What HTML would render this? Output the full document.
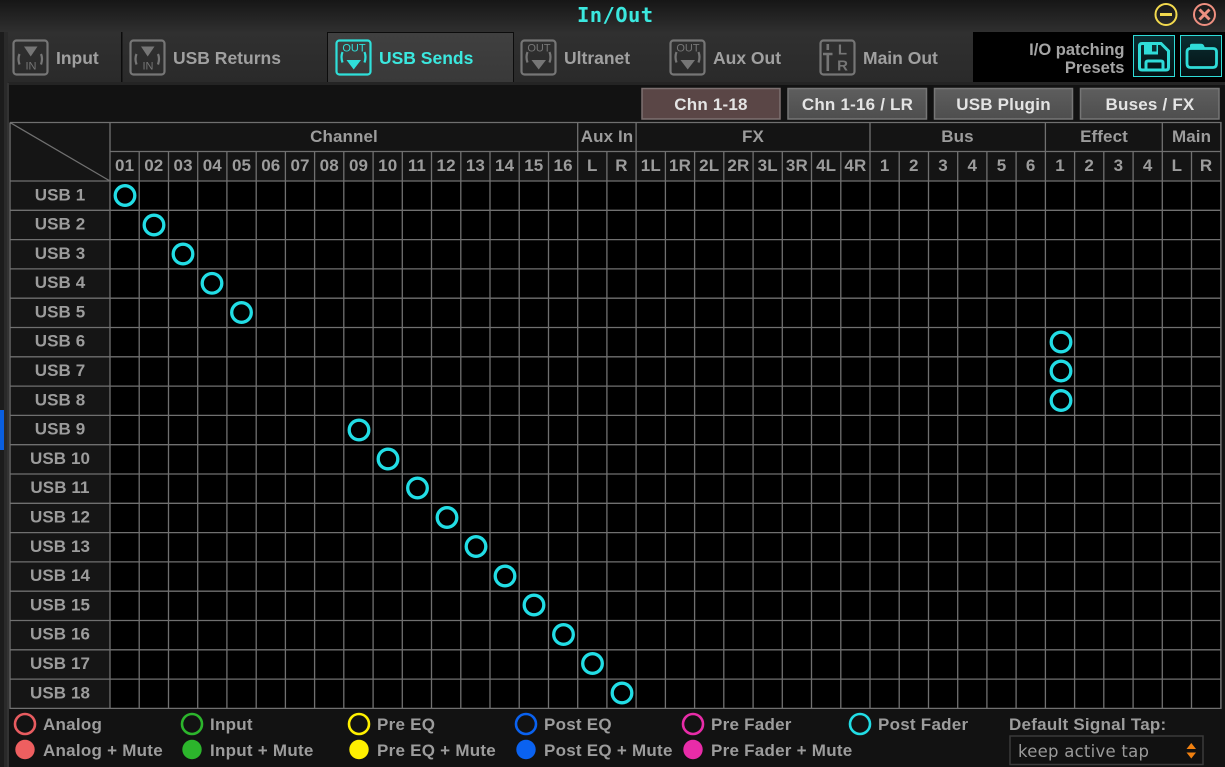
<!DOCTYPE html>
<html><head><meta charset="utf-8"><style>
html,body{margin:0;padding:0;background:#121212;width:1225px;height:767px;overflow:hidden}
svg{display:block;position:absolute;left:0;top:0}
text{font-family:"Liberation Sans",sans-serif;font-weight:bold;font-size:17px;fill:#9c9c9c;letter-spacing:.25px}
.m{text-anchor:middle;letter-spacing:.1px}
.t{font-size:17.5px;fill:#a0a0a0;letter-spacing:0}
.b{font-size:17px;fill:#e4e4e4;text-anchor:middle;letter-spacing:.2px}
.ic{font-size:11px;font-weight:normal;fill:#767676;text-anchor:middle;letter-spacing:0}
.g{fill:none;stroke:#767676;stroke-width:2.2}
.c{fill:none;stroke:#22dde5;stroke-width:3.3}
</style></head><body>
<svg width="1225" height="767" viewBox="0 0 1225 767" xmlns="http://www.w3.org/2000/svg">
<defs>
<linearGradient id="tb" x1="0" y1="0" x2="0" y2="1"><stop offset="0" stop-color="#161616"/><stop offset="1" stop-color="#2f2f2f"/></linearGradient>
<linearGradient id="tab" x1="0" y1="0" x2="0" y2="1"><stop offset="0" stop-color="#303030"/><stop offset="1" stop-color="#2a2a2a"/></linearGradient>
<linearGradient id="act" x1="0" y1="0" x2="0" y2="1"><stop offset="0" stop-color="#404040"/><stop offset="1" stop-color="#393939"/></linearGradient>
<linearGradient id="btn" x1="0" y1="0" x2="0" y2="1"><stop offset="0" stop-color="#5e5e5e"/><stop offset="1" stop-color="#4e4e4e"/></linearGradient>
<linearGradient id="sv" x1="0" y1="0" x2="0" y2="1"><stop offset="0" stop-color="#0a2f33"/><stop offset="1" stop-color="#041012"/></linearGradient>
</defs>

<rect width="1225" height="767" fill="#121212"/>
<rect width="1225" height="32" fill="url(#tb)"/>
<rect y="32" width="1225" height="51" fill="url(#tab)"/>
<rect x="973" y="32" width="252" height="50" fill="#000"/>
<rect x="121" y="32" width="1.5" height="50" fill="#0c0c0c"/>
<rect x="328" y="33" width="185" height="49" fill="url(#act)"/>
<path d="M327.500 82V32.500H513.500V82" fill="none" stroke="#0c0c0c"/>
<rect y="82" width="1225" height="3" fill="#242424"/>

<rect x="0" y="32" width="8" height="735" fill="#2a2a2a"/>
<rect x="0" y="32" width="4" height="735" fill="#1c1c1c"/>
<rect x="0" y="410" width="4" height="40" fill="#0a5fe0"/>
<rect x="7" y="83" width="2" height="684" fill="#333"/>
<rect x="9" y="85" width="1216" height="682" fill="#121212"/>

<text x="577" y="22" style="font-family:'DejaVu Sans Mono',monospace;font-size:20.500px;fill:#3be8df;letter-spacing:.4px">In/Out</text>

<circle cx="1166" cy="14.500" r="10.500" fill="none" stroke="#f2d94e" stroke-width="2"/>
<path d="M1160 14.500H1172" stroke="#f2d94e" stroke-width="3" fill="none"/>
<circle cx="1204.500" cy="14.500" r="10.500" fill="none" stroke="#ee8f80" stroke-width="2"/>
<path d="M1199.500 9.500L1209.500 19.500M1209.500 9.500L1199.500 19.500" stroke="#ee8f80" stroke-width="3" fill="none"/>

<g transform="translate(13.500 40.500)"><rect width="34" height="34" rx="3" class="g"/><path d="M10.500 6H24L17.200 16Z" fill="#767676"/><path d="M6 13.500Q4 18 6 24M27.500 13.500Q29.500 18 27.500 24" class="g"/><text x="17.500" y="29" class="ic">IN</text></g>
<g transform="translate(130.500 40.500)"><rect width="34" height="34" rx="3" class="g"/><path d="M10.500 6H24L17.200 16Z" fill="#767676"/><path d="M6 13.500Q4 18 6 24M27.500 13.500Q29.500 18 27.500 24" class="g"/><text x="17.500" y="29" class="ic">IN</text></g>
<g transform="translate(336.500 40.500)"><rect width="34" height="34" rx="3" fill="none" stroke="#2fe0da" stroke-width="2.200"/><path d="M10 19.500H24.500L17.200 29Z" fill="#2fe0da"/><path d="M6 11.500Q4 16.500 6 22M28 11.500Q30 16.500 28 22" fill="none" stroke="#2fe0da" stroke-width="2.200"/><text x="17.500" y="11" class="ic" style="fill:#2fe0da">OUT</text></g>
<g transform="translate(521.500 40.500)"><rect width="34" height="34" rx="3" class="g"/><path d="M10 19.500H24.500L17.200 29Z" fill="#767676"/><path d="M6 11.500Q4 16.500 6 22M28 11.500Q30 16.500 28 22" class="g"/><text x="17.500" y="11" class="ic">OUT</text></g>
<g transform="translate(670.500 40.500)"><rect width="34" height="34" rx="3" class="g"/><path d="M10 19.500H24.500L17.200 29Z" fill="#767676"/><path d="M6 11.500Q4 16.500 6 22M28 11.500Q30 16.500 28 22" class="g"/><text x="17.500" y="11" class="ic">OUT</text></g>
<g transform="translate(820.500 40.500)"><rect width="34" height="34" rx="3" class="g"/><path d="M7.300 3.500V9.500M7.300 14V30.500M2.500 13.500H12" class="g" style="stroke-width:2.600"/><text x="22" y="14" class="ic" style="font-size:15px;font-weight:bold">L</text><text x="22" y="30" class="ic" style="font-size:15px;font-weight:bold">R</text></g>

<text x="56" y="64" class="t">Input</text>
<text x="173" y="64" class="t">USB Returns</text>
<text x="379" y="64" class="t" style="fill:#3be8df">USB Sends</text>
<text x="564" y="64" class="t">Ultranet</text>
<text x="713" y="64" class="t">Aux Out</text>
<text x="863" y="64" class="t">Main Out</text>

<text x="1124.500" y="55" style="text-anchor:end;font-size:16.500px;fill:#a4a4a4;letter-spacing:0">I/O patching</text>
<text x="1124.500" y="73" style="text-anchor:end;font-size:16.500px;fill:#a4a4a4;letter-spacing:0">Presets</text>

<rect x="1133.500" y="35.500" width="41" height="41" fill="url(#sv)" stroke="#2fdcd8"/>
<path d="M1142 43.500H1161L1168.500 51V67.500Q1168.500 70 1166 70H1142Q1139.500 70 1139.500 67.500V46Q1139.500 43.500 1142 43.500Z" fill="none" stroke="#2fdcd8" stroke-width="3"/>
<path d="M1144 43H1158V54.500H1144Z" fill="#2fdcd8"/><rect x="1152" y="45" width="4.500" height="6.500" fill="#0a2f33"/>
<path d="M1146 70V63Q1146 61 1148 61H1161Q1163 61 1163 63V70" fill="none" stroke="#2fdcd8" stroke-width="3"/>
<rect x="1180.500" y="35.500" width="41" height="41" fill="url(#sv)" stroke="#2fdcd8"/>
<path d="M1187 52Q1187 48.500 1190.500 48.500H1213Q1216.500 48.500 1216.500 52V63.500Q1216.500 67.500 1213 67.500H1190.500Q1187 67.500 1187 63.500Z" fill="none" stroke="#2fdcd8" stroke-width="2.800"/>
<path d="M1190 48V45.500Q1190 43.800 1192 43.800H1201Q1203 43.800 1204 45.500L1205 48Z" fill="#2fdcd8"/>

<rect x="642" y="88.500" width="138" height="30.500" fill="#5a4646" stroke="#7c7070" stroke-width="1.500"/>
<rect x="788" y="88.500" width="138.500" height="30.500" fill="url(#btn)" stroke="#767676" stroke-width="1.500"/>
<rect x="934.500" y="88.500" width="138" height="30.500" fill="url(#btn)" stroke="#767676" stroke-width="1.500"/>
<rect x="1080.500" y="88.500" width="138.500" height="30.500" fill="url(#btn)" stroke="#767676" stroke-width="1.500"/>
<text x="711" y="110" class="b">Chn 1-18</text>
<text x="857.500" y="110" class="b">Chn 1-16 / LR</text>
<text x="1003.500" y="110" class="b">USB Plugin</text>
<text x="1150" y="110" class="b">Buses / FX</text>

<rect x="10" y="122.500" width="100" height="586" fill="#151515"/>
<rect x="110" y="122.500" width="1111" height="58.500" fill="#141414"/>
<rect x="110" y="181" width="1111" height="527.400" fill="#000"/>
<path d="M10 122.500H1221V708.400H110M110 122.500V708.400M10 122.500V708.400H110M10 122.500L110 181M110 151.500H1221M10 181H1221
M577.700 122.500V181M636.100 122.500V181M870 122.500V181M1045.400 122.500V181M1162.300 122.500V181M1220.800 122.500V708.400
M139.200 151.500V708.400M168.500 151.500V708.400M197.700 151.500V708.400M226.900 151.500V708.400M256.200 151.500V708.400M285.400 151.500V708.400M314.600 151.500V708.400M343.800 151.500V708.400M373.100 151.500V708.400M402.300 151.500V708.400M431.500 151.500V708.400M460.800 151.500V708.400M490 151.500V708.400M519.200 151.500V708.400M548.500 151.500V708.400M577.700 151.500V708.400M606.900 151.500V708.400M636.100 151.500V708.400M665.400 151.500V708.400M694.600 151.500V708.400M723.800 151.500V708.400M753.100 151.500V708.400M782.300 151.500V708.400M811.500 151.500V708.400M840.800 151.500V708.400M870 151.500V708.400M899.200 151.500V708.400M928.500 151.500V708.400M957.700 151.500V708.400M986.900 151.500V708.400M1016.100 151.500V708.400M1045.400 151.500V708.400M1074.600 151.500V708.400M1103.800 151.500V708.400M1133.100 151.500V708.400M1162.300 151.500V708.400M1191.500 151.500V708.400
M10 210.300H1221M10 239.600H1221M10 268.900H1221M10 298.200H1221M10 327.500H1221M10 356.800H1221M10 386.100H1221M10 415.400H1221M10 444.700H1221M10 474H1221M10 503.300H1221M10 532.600H1221M10 561.900H1221M10 591.200H1221M10 620.500H1221M10 649.800H1221M10 679.100H1221" fill="none" stroke="#707070" stroke-width="1.300"/>

<g>
<text x="344" y="142" class="m">Channel</text><text x="607" y="142" class="m">Aux In</text><text x="753" y="142" class="m">FX</text><text x="957.500" y="142" class="m">Bus</text><text x="1104" y="142" class="m">Effect</text><text x="1191.500" y="142" class="m">Main</text>
<text x="124.600" y="171" class="m">01</text><text x="153.800" y="171" class="m">02</text><text x="183.100" y="171" class="m">03</text><text x="212.300" y="171" class="m">04</text><text x="241.500" y="171" class="m">05</text><text x="270.800" y="171" class="m">06</text><text x="300" y="171" class="m">07</text><text x="329.200" y="171" class="m">08</text><text x="358.500" y="171" class="m">09</text><text x="387.700" y="171" class="m">10</text><text x="416.900" y="171" class="m">11</text><text x="446.100" y="171" class="m">12</text><text x="475.400" y="171" class="m">13</text><text x="504.600" y="171" class="m">14</text><text x="533.800" y="171" class="m">15</text><text x="563.100" y="171" class="m">16</text><text x="592.300" y="171" class="m">L</text><text x="621.500" y="171" class="m">R</text><text x="650.800" y="171" class="m">1L</text><text x="680" y="171" class="m">1R</text><text x="709.200" y="171" class="m">2L</text><text x="738.400" y="171" class="m">2R</text><text x="767.700" y="171" class="m">3L</text><text x="796.900" y="171" class="m">3R</text><text x="826.100" y="171" class="m">4L</text><text x="855.400" y="171" class="m">4R</text><text x="884.600" y="171" class="m">1</text><text x="913.800" y="171" class="m">2</text><text x="943" y="171" class="m">3</text><text x="972.300" y="171" class="m">4</text><text x="1001.500" y="171" class="m">5</text><text x="1030.700" y="171" class="m">6</text><text x="1060" y="171" class="m">1</text><text x="1089.200" y="171" class="m">2</text><text x="1118.400" y="171" class="m">3</text><text x="1147.700" y="171" class="m">4</text><text x="1176.900" y="171" class="m">L</text><text x="1206.100" y="171" class="m">R</text>
</g>
<g transform="translate(0 -0.800)">
<text x="60" y="201.500" class="m">USB 1</text><text x="60" y="230.300" class="m">USB 2</text><text x="60" y="259.600" class="m">USB 3</text><text x="60" y="288.900" class="m">USB 4</text><text x="60" y="318.200" class="m">USB 5</text><text x="60" y="347.500" class="m">USB 6</text><text x="60" y="376.800" class="m">USB 7</text><text x="60" y="406.100" class="m">USB 8</text><text x="60" y="435.400" class="m">USB 9</text><text x="60" y="464.700" class="m">USB 10</text><text x="60" y="494" class="m">USB 11</text><text x="60" y="523.300" class="m">USB 12</text><text x="60" y="552.600" class="m">USB 13</text><text x="60" y="581.900" class="m">USB 14</text><text x="60" y="611.200" class="m">USB 15</text><text x="60" y="640.500" class="m">USB 16</text><text x="60" y="669.800" class="m">USB 17</text><text x="60" y="699.100" class="m">USB 18</text>
</g>

<circle cx="125" cy="195.500" r="9.800" class="c"/><circle cx="154" cy="225" r="9.800" class="c"/><circle cx="183" cy="254" r="9.800" class="c"/><circle cx="212" cy="283.300" r="9.800" class="c"/><circle cx="241.500" cy="312.500" r="9.800" class="c"/><circle cx="1061" cy="342" r="9.800" class="c"/><circle cx="1061" cy="371" r="9.800" class="c"/><circle cx="1061" cy="400.500" r="9.800" class="c"/><circle cx="359" cy="430" r="9.800" class="c"/><circle cx="388" cy="459" r="9.800" class="c"/><circle cx="417.500" cy="488" r="9.800" class="c"/><circle cx="447" cy="517.500" r="9.800" class="c"/><circle cx="476" cy="546.500" r="9.800" class="c"/><circle cx="505" cy="576" r="9.800" class="c"/><circle cx="534" cy="605" r="9.800" class="c"/><circle cx="563.500" cy="634.500" r="9.800" class="c"/><circle cx="592.500" cy="663.500" r="9.800" class="c"/><circle cx="622" cy="693" r="9.800" class="c"/>

<circle cx="25" cy="724" r="10" fill="none" stroke="#e85c60" stroke-width="2.600"/><circle cx="25" cy="749.500" r="9.700" fill="#ee5f60"/>
<circle cx="192" cy="724" r="10" fill="none" stroke="#2cb52c" stroke-width="2.600"/><circle cx="192" cy="749.500" r="9.700" fill="#2cb52c"/>
<circle cx="359" cy="724" r="10" fill="none" stroke="#fff000" stroke-width="2.600"/><circle cx="359" cy="749.500" r="9.700" fill="#fff000"/>
<circle cx="526" cy="724" r="10" fill="none" stroke="#0a62f0" stroke-width="2.600"/><circle cx="526" cy="749.500" r="9.700" fill="#0a62f0"/>
<circle cx="693" cy="724" r="10" fill="none" stroke="#e82ca8" stroke-width="2.600"/><circle cx="693" cy="749.500" r="9.700" fill="#e82ca8"/>
<circle cx="860" cy="724" r="10" fill="none" stroke="#22dde5" stroke-width="2.600"/>

<text x="43" y="730">Analog</text><text x="43" y="756">Analog + Mute</text>
<text x="210" y="730">Input</text><text x="210" y="756">Input + Mute</text>
<text x="377" y="730">Pre EQ</text><text x="377" y="756">Pre EQ + Mute</text>
<text x="544" y="730">Post EQ</text><text x="544" y="756">Post EQ + Mute</text>
<text x="711" y="730">Pre Fader</text><text x="711" y="756">Pre Fader + Mute</text>
<text x="878" y="730">Post Fader</text>
<text x="1009" y="730">Default Signal Tap:</text>

<rect x="1010" y="736" width="193" height="28.500" fill="#111" stroke="#3a3a3a" stroke-width="1.500"/>
<text x="1018" y="757" style="font-family:'DejaVu Sans',sans-serif;font-weight:normal;font-size:16.500px;letter-spacing:.25px;fill:#9a9a9a">keep active tap</text>
<path d="M1186.500 749L1191.300 743L1196 749ZM1186.500 752.500H1196L1191.300 758.500Z" fill="#f08010"/>
</svg>
</body></html>
